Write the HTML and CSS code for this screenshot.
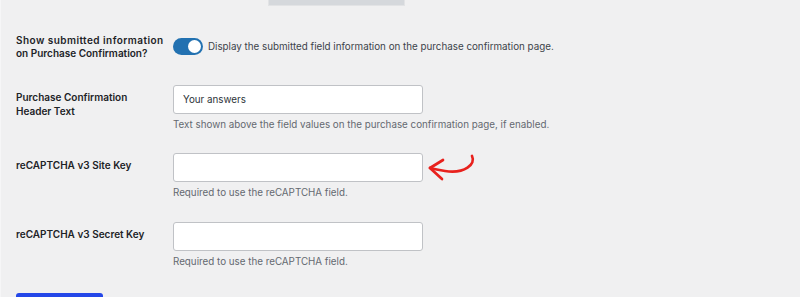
FILE: index.html
```html
<!DOCTYPE html>
<html lang="en">
<head>
    <meta charset="UTF-8">
    <link rel="stylesheet" href="styles.css">
    <title>Settings</title>
</head>
<body>
    <div class="tabs">
        <span class="tab"></span>
    </div>

    <div class="form">
        <div class="row row-toggle">
            <div class="label"><span class="wide">Show submitted information</span><br>on Purchase Confirmation?</div>
            <div class="field">
                <label class="switch">
                    <span class="track"><span class="knob"></span></span>
                    <span class="switch-text">Display the submitted field information on the purchase confirmation page.</span>
                </label>
            </div>
        </div>

        <div class="row">
            <div class="label">Purchase Confirmation Header Text</div>
            <div class="field">
                <div class="input-wrap"><input type="text" value="Your answers"></div>
                <p class="desc">Text shown above the field values on the purchase confirmation page, if enabled.</p>
            </div>
        </div>

        <div class="row">
            <div class="label">reCAPTCHA v3 Site Key</div>
            <div class="field">
                <div class="input-wrap">
                    <input type="text" value="">
                    <!-- hand drawn arrow pointing at the field -->
                    <svg class="arrow" width="56" height="36" viewBox="0 0 56 36">
                        <path d="M47 6 C51 14 40 24 20 21 C14 20 9 19 5 18" fill="none" stroke="#e8211d" stroke-width="2.7" stroke-linecap="round"/>
                        <path d="M18 10 L5 18 L17 29" fill="none" stroke="#e8211d" stroke-width="2.7" stroke-linecap="round" stroke-linejoin="round"/>
                    </svg>
                </div>
                <p class="desc">Required to use the reCAPTCHA field.</p>
            </div>
        </div>

        <div class="row">
            <div class="label">reCAPTCHA v3 Secret Key</div>
            <div class="field">
                <div class="input-wrap"><input type="text" value=""></div>
                <p class="desc">Required to use the reCAPTCHA field.</p>
            </div>
        </div>
    </div>

    <button class="primary"></button>
</body>
</html>
```

FILE: styles.css
```css
body {
    margin: 0;
    background: #f0f0f1;
    font-family: "Inter", "Liberation Sans", sans-serif;
    color: #1d2327;
    border-left: 1px solid #f6f6f7;
    height: 297px;
    overflow: hidden;
}

.tabs {
    display: flex;
    height: 6px;
}

.tab {
    margin-left: 267px;
    width: 135px;
    height: 5px;
    background: #d5d8dc;
    border: 1px solid #e2e3e5;
    border-top: none;
}

.form {
    margin-top: 13px;
    padding-left: 15px;
}

.row {
    display: grid;
    grid-template-columns: 157px 1fr;
}

.label {
    font-size: 10px;
    font-weight: 600;
    line-height: 14px;
    padding: 15px 12px 0 0;
    color: #1d2327;
}

.row-toggle .label {
    padding-top: 15px;
    line-height: 13.4px;
    white-space: nowrap;
}

.wide {
    letter-spacing: 0.45px;
}

.field {
    padding: 10px 0 11.3px;
}

.row-toggle .field {
    padding: 19px 0 20px;
}

.switch {
    display: flex;
    align-items: center;
    gap: 5px;
    font-size: 9.8px;
    color: #3c434a;
}

.track {
    width: 30px;
    height: 17px;
    border-radius: 9px;
    background: #2271b1;
    position: relative;
}

.knob {
    position: absolute;
    right: 2px;
    top: 2px;
    width: 13px;
    height: 13px;
    border-radius: 50%;
    background: #fff;
}

.input-wrap {
    position: relative;
    width: 250px;
}

input {
    display: block;
    box-sizing: border-box;
    width: 250px;
    height: 29px;
    margin: 0;
    padding: 0 9px;
    border: 1px solid #c0c2c6;
    border-radius: 3px;
    background: #fff;
    font-family: inherit;
    font-size: 9.8px;
    color: #2c3338;
}

.arrow {
    position: absolute;
    left: 252px;
    top: -3px;
}

.desc {
    margin: 4px 0 0;
    font-size: 9.8px;
    line-height: 14px;
    color: #646970;
}

button.primary {
    display: block;
    margin: 13px 0 0 15px;
    width: 87px;
    height: 28px;
    border: none;
    border-radius: 3px 3px 0 0;
    background: #2447e8;
}
```
